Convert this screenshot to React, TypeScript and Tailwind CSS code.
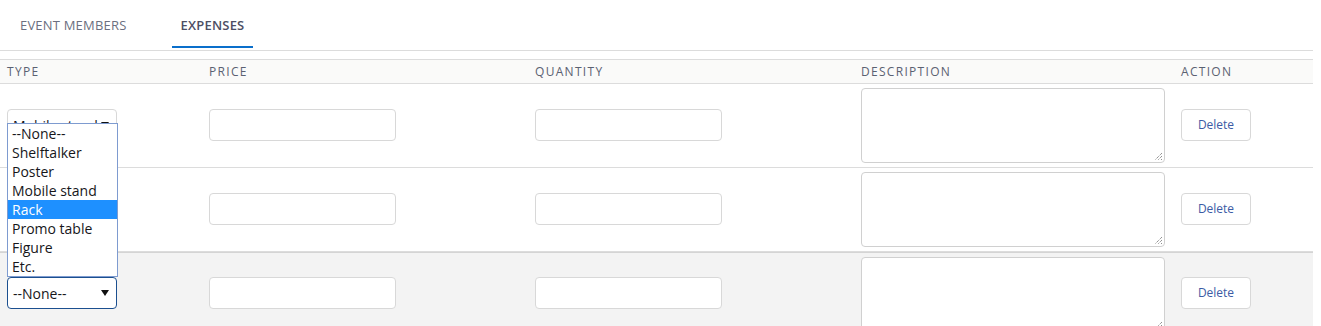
import React from "react";

const font = { fontFamily: '"Open Sans", "Noto Sans", Arial, sans-serif' };

function Arrow() {
  return (
    <svg width="8" height="6" viewBox="0 0 8 6" className="shrink-0">
      <path d="M0 0 L8 0 L4 6 Z" fill="#111" />
    </svg>
  );
}

function Select({ value, focused }: { value: string; focused?: boolean }) {
  return (
    <div
      className={
        "flex h-[32px] w-[110px] items-center justify-between rounded-[4px] bg-white pl-[5px] pr-[7px] text-[14px] text-[#16161a] " +
        (focused ? "border-[1.5px] border-[#1b4f8f]" : "border border-[#d8d8d8]")
      }
    >
      <span>{value}</span>
      <Arrow />
    </div>
  );
}

function Input() {
  return <div className="h-[32px] w-[187px] rounded-[4px] border border-[#d8d8d8] bg-white" />;
}

function TextArea() {
  return (
    <div className="relative h-[75px] w-[304px] rounded-[4px] border border-[#d0d0d0] bg-white">
      <svg width="9" height="9" viewBox="0 0 9 9" className="absolute bottom-[1px] right-[1px]">
        <path d="M8 1 L1 8 M8 4 L4 8 M8 7 L7 8" stroke="#666" strokeWidth="1" strokeDasharray="1 1" />
      </svg>
    </div>
  );
}

function DeleteBtn() {
  return (
    <div className="flex h-[32px] w-[70px] items-center justify-center rounded-[4px] border border-[#d8d8d8] bg-white pb-[1px] text-[12px] text-[#3b5ba5]">
      Delete
    </div>
  );
}

const cols = "grid grid-cols-[202px_326px_326px_320px_139px]";

function Row({ select, hover }: { select: React.ReactNode; hover?: boolean }) {
  return (
    <div
      className={
        cols +
        " items-center pb-[1px] " +
        (hover ? "h-[82px] border-t border-[#d4d4d4] bg-[#f3f3f3]" : "h-[84px] border-b border-[#dcdcdc]")
      }
    >
      <div className="pl-[7px]">{select}</div>
      <div className="pl-[7px]">
        <Input />
      </div>
      <div className="pl-[7px]">
        <Input />
      </div>
      <div className="self-start pl-[7px] pt-[4px]">
        <TextArea />
      </div>
      <div className="pl-[7px]">
        <DeleteBtn />
      </div>
    </div>
  );
}

const options = ["--None--", "Shelftalker", "Poster", "Mobile stand", "Rack", "Promo table", "Figure", "Etc."];

export default function App() {
  return (
    <div className="relative h-[326px] w-[1321px] overflow-hidden bg-white" style={font}>
      <div className="w-[1313px]">
        <div className="flex h-[51px] gap-[36px] border-b border-[#dcdcdc] pl-[11px]">
          <div className="flex h-[48px] items-center border-b-2 border-transparent px-[9px] pt-[5px] text-[13px] tracking-[0.2px] text-[#6b6f80]">
            EVENT MEMBERS
          </div>
          <div className="flex h-[48px] items-center border-b-[2px] border-[#0a6fcb] px-[9px] pt-[5px] text-[13px] font-semibold tracking-[0.2px] text-[#4d4e63]">
            EXPENSES
          </div>
        </div>
        <div className="h-[8px]" />
        <div className={cols + " h-[25px] items-center border-y border-[#dcdcdc] bg-[#fafaf9] text-[12px] tracking-[1.3px] text-[#5a6172]"}>
          <div className="pl-[7px]">TYPE</div>
          <div className="pl-[7px]">PRICE</div>
          <div className="pl-[7px]">QUANTITY</div>
          <div className="pl-[7px]">DESCRIPTION</div>
          <div className="pl-[7px]">ACTION</div>
        </div>
        <Row select={<Select value="Mobile stand" />} />
        <Row select={<div className="h-[32px] w-[110px]" />} />
        <Row select={<Select value="--None--" focused />} hover />
      </div>

      <div className="absolute left-[7px] top-[123px] w-[111px] border border-[#7e9bd0] bg-white text-[14px] text-[#16161a]">
        {options.map((o) => (
          <div
            key={o}
            className={"flex h-[19px] items-center pl-[4px] " + (o === "Rack" ? "bg-[#1e90ff] text-white" : "")}
          >
            {o}
          </div>
        ))}
      </div>
    </div>
  );
}
